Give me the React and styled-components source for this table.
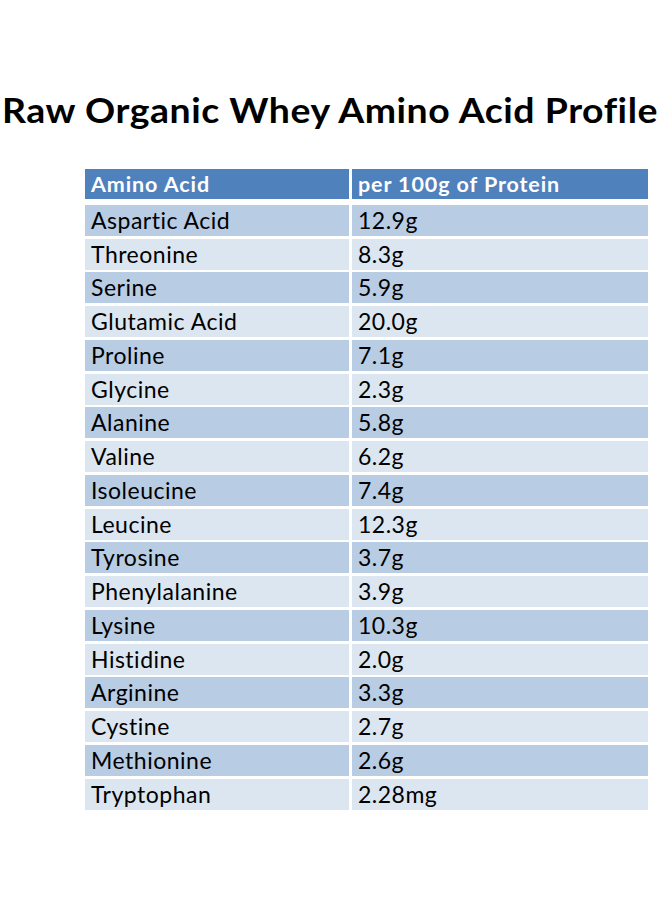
import React from "react";
import styled, { createGlobalStyle } from "styled-components";

const Global = createGlobalStyle`
  html, body { margin: 0; padding: 0; background: #ffffff; }
  body { font-family: Lato, "Open Sans", sans-serif; }
`;

const Page = styled.div`
  width: 660px;
  height: 904px;
  display: flex;
  flex-direction: column;
  padding-top: 88px;
  box-sizing: border-box;
  overflow: hidden;
`;

const Title = styled.h1`
  margin: 0;
  font-family: Lato, sans-serif;
  font-weight: 700;
  font-size: 34px;
  line-height: 44px;
  letter-spacing: 0.5px;
  color: #000;
  white-space: nowrap;
  text-align: center;
  width: 660px;
  transform: scaleX(1.1);
  transform-origin: center;
`;

const Table = styled.div`
  margin: 37px 0 0 85px;
  display: grid;
  grid-template-columns: 264px 296px;
  column-gap: 3px;
  row-gap: 2.76px;
  font-family: Lato, sans-serif;
`;

const HeadCell = styled.div`
  background: #4f81bd;
  color: #ffffff;
  font-weight: 700;
  font-size: 21.5px;
  letter-spacing: 0.9px;
  line-height: 31px;
  height: 30px;
  padding: 0 0 0 6px;
  margin-bottom: 3px;
  white-space: nowrap;
  overflow: hidden;
`;

const Cell = styled.div`
  background: ${(p) => (p.$odd ? "#b8cce4" : "#dce6f1")};
  color: #000;
  font-size: 23px;
  letter-spacing: 0.5px;
  line-height: 31px;
  height: 31px;
  padding: 0 0 0 6px;
  white-space: nowrap;
  overflow: hidden;
`;

const rows = [
  ["Aspartic Acid", "12.9g"],
  ["Threonine", "8.3g"],
  ["Serine", "5.9g"],
  ["Glutamic Acid", "20.0g"],
  ["Proline", "7.1g"],
  ["Glycine", "2.3g"],
  ["Alanine", "5.8g"],
  ["Valine", "6.2g"],
  ["Isoleucine", "7.4g"],
  ["Leucine", "12.3g"],
  ["Tyrosine", "3.7g"],
  ["Phenylalanine", "3.9g"],
  ["Lysine", "10.3g"],
  ["Histidine", "2.0g"],
  ["Arginine", "3.3g"],
  ["Cystine", "2.7g"],
  ["Methionine", "2.6g"],
  ["Tryptophan", "2.28mg"],
];

export default function App() {
  return (
    <>
      <Global />
      <Page>
        <Title>Raw Organic Whey Amino Acid Profile</Title>
        <Table>
          <HeadCell>Amino Acid</HeadCell>
          <HeadCell>per 100g of Protein</HeadCell>
          {rows.map(([name, val], i) => (
            <React.Fragment key={name}>
              <Cell $odd={i % 2 === 0}>{name}</Cell>
              <Cell $odd={i % 2 === 0}>{val}</Cell>
            </React.Fragment>
          ))}
        </Table>
      </Page>
    </>
  );
}
